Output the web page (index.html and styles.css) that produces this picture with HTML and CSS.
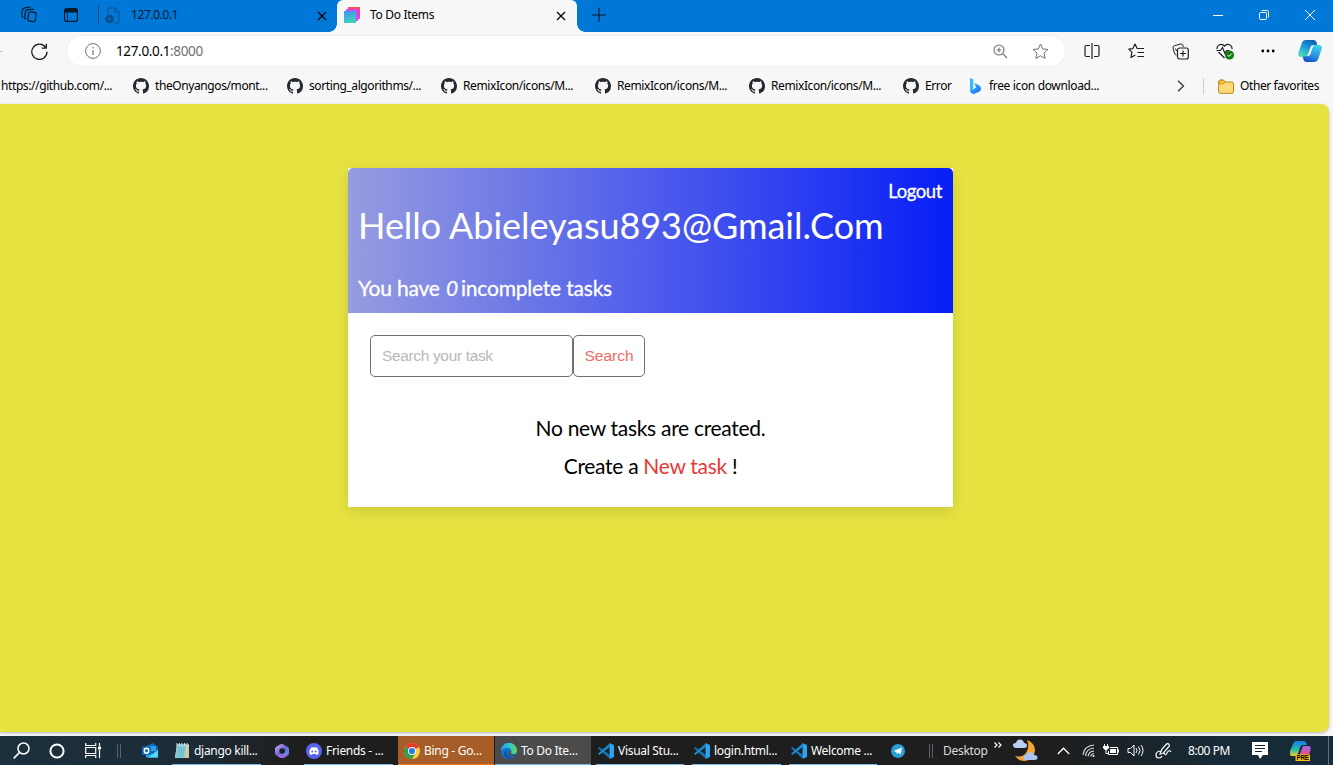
FILE: index.html
```
<!DOCTYPE html>
<html lang="en">
<head>
<meta charset="utf-8">
<title>To Do Items</title>
<link rel="stylesheet" href="styles.css">
</head>
<body>
<svg class="defs" width="0" height="0" aria-hidden="true">
  <defs>
    <linearGradient id="pink" x1="0" y1="0" x2="0" y2="1"><stop offset="0" stop-color="#f0564e"/><stop offset=".5" stop-color="#ee35c9"/><stop offset="1" stop-color="#c95cf5"/></linearGradient>
    <linearGradient id="aqua" x1="0" y1="0" x2=".3" y2="1"><stop offset="0" stop-color="#3f93ee"/><stop offset="1" stop-color="#3fd0c0"/></linearGradient>
    <linearGradient id="bingfill" x1="0" y1="0" x2="1" y2="1"><stop offset="0" stop-color="#2fc1ff"/><stop offset=".65" stop-color="#2589f5"/><stop offset="1" stop-color="#2a58dd"/></linearGradient>
    <linearGradient id="cop1" x1=".7" y1="0" x2=".2" y2="1"><stop offset="0" stop-color="#0d5fae"/><stop offset=".45" stop-color="#1c9bd8"/><stop offset="1" stop-color="#4fe0b8"/></linearGradient>
    <linearGradient id="cop2" x1=".7" y1="0" x2=".3" y2="1"><stop offset="0" stop-color="#3fd3e8"/><stop offset=".5" stop-color="#2a9be8"/><stop offset="1" stop-color="#1650cf"/></linearGradient>
    <linearGradient id="cop3" x1="0" y1="0" x2="0" y2="1"><stop offset="0" stop-color="#1877e9"/><stop offset=".55" stop-color="#28b9a6"/><stop offset="1" stop-color="#e6cf37"/></linearGradient>
    <linearGradient id="cop4" x1="0" y1="0" x2="0" y2="1"><stop offset="0" stop-color="#a064ed"/><stop offset="1" stop-color="#f14e79"/></linearGradient>
    <linearGradient id="edge1" x1="0" y1="0" x2="1" y2="0"><stop offset="0" stop-color="#249fe2"/><stop offset=".55" stop-color="#2cc8c8"/><stop offset="1" stop-color="#68db4c"/></linearGradient>
    <linearGradient id="m365" x1="0" y1="0" x2="1" y2="1"><stop offset="0" stop-color="#c9b4fa"/><stop offset=".5" stop-color="#6a62d6"/><stop offset="1" stop-color="#4fb2ed"/></linearGradient>
    <symbol id="github" viewBox="0 0 16 16"><path fill="#24292f" d="M8 0C3.58 0 0 3.58 0 8c0 3.54 2.29 6.53 5.47 7.59.4.07.55-.17.55-.38 0-.19-.01-.82-.01-1.49-2.01.37-2.53-.49-2.69-.94-.09-.23-.48-.94-.82-1.13-.28-.15-.68-.52-.01-.53.63-.01 1.08.58 1.23.82.72 1.21 1.87.87 2.33.66.07-.52.28-.87.51-1.07-1.78-.2-3.64-.89-3.64-3.95 0-.87.31-1.59.82-2.15-.08-.2-.36-1.02.08-2.12 0 0 .67-.21 2.2.82.64-.18 1.32-.27 2-.27.68 0 1.36.09 2 .27 1.53-1.04 2.2-.82 2.2-.82.44 1.1.16 1.92.08 2.12.51.56.82 1.27.82 2.15 0 3.07-1.87 3.75-3.65 3.95.29.25.54.73.54 1.48 0 1.07-.01 1.93-.01 2.2 0 .21.15.46.55.38A8.01 8.01 0 0 0 16 8c0-4.42-3.58-8-8-8z"/></symbol>
    <symbol id="vscode" viewBox="0 0 16 16"><path fill="#1576b8" d="M0 5.2 1.3 4l10.2 7.8v3.7L0 5.2z"/><path fill="#1b8ad3" d="M0 10.8 1.3 12l10.200-7.800V.5L0 10.800z"/><path fill="#2ba3ee" d="M11.500 0 16 2v12l-4.500 2z"/></symbol>
    <symbol id="close" viewBox="0 0 10 10"><path d="M1 1l8 8M9 1L1 9" fill="none" stroke="currentColor" stroke-width="1.200"/></symbol>
  </defs>
</svg>

<header class="tabstrip">
  <svg class="i workspaces" width="18" height="18" viewBox="0 0 18 18"><g fill="none" stroke="#0b1a28" stroke-width="1.200" stroke-linecap="round"><rect x="8.200" y="6" width="7.600" height="9.500" rx="2" transform="rotate(8 12 11)"/><path d="M5.500 13.200Q4.600 12.500 4.800 11L5.300 6Q5.600 4 7.500 3.600L13.500 3.300M2.800 11.200Q1.600 10.500 1.700 9L2.200 4.500Q2.500 2.300 4.500 1.800L10.500 1"/></g></svg>
  <svg class="i tab-actions" width="14" height="14" viewBox="0 0 14 14"><rect x=".6" y=".6" width="12.800" height="12.800" rx="2.200" fill="none" stroke="#0b1a28" stroke-width="1.200"/><path d="M.6 3V2.500C.6 1.400 1.400.6 2.500.6h9c1.100 0 1.900.8 1.900 1.900v2H.6z" fill="#0b1a28"/><path d="M3.500 4v9" stroke="#0b1a28" stroke-width=".7"/></svg>
  <span class="tab-rule"></span>
  <svg class="i page-icon" width="16" height="17" viewBox="0 0 16 17"><path d="M3 7V2.500C3 1.500 3.500 1 4.500 1H10l4 4v9.500c0 1-.5 1.500-1.500 1.500H9M10 1v4h4" fill="none" stroke="#0a559b" stroke-width="1.200"/><circle cx="4.500" cy="12" r="4.300" fill="#0a4d8c"/><path d="M3 10.500l3 3m0-3l-3 3" stroke="#0078d7"/></svg>
  <span class="tab-title first">127.0.0.1</span>
  <svg class="i tab-close" width="10" height="10"><use href="#close"/></svg>
  <div class="tab">
    <svg class="i" width="16" height="16" viewBox="0 0 16 16"><path d="M4 0h12v12H4z" fill="url(#pink)"/><path d="M2 2h12v12H2z" fill="#d944ee"/><path d="M0 4h12v12H0z" fill="url(#aqua)"/></svg>
    <span class="tab-title">To Do Items</span>
    <svg class="i end" width="10" height="10"><use href="#close"/></svg>
  </div>
  <svg class="i plus" width="14" height="14" viewBox="0 0 14 14"><path d="M7 0v14M0 7h14" stroke="#071a2b" stroke-width="1.200"/></svg>
  <div class="window-buttons">
    <svg width="10" height="10" viewBox="0 0 10 10"><path d="M0 5.500h10" stroke="#fff"/></svg>
    <svg width="10" height="10" viewBox="0 0 10 10"><rect x=".5" y="2.500" width="7" height="7" rx="1" fill="none" stroke="#fff"/><path d="M2.500.5H8C9 .5 9.500 1 9.500 2v5.500" fill="none" stroke="#fff"/></svg>
    <svg width="10" height="10" viewBox="0 0 10 10"><path d="M0 0l10 10M10 0L0 10" stroke="#fff"/></svg>
  </div>
</header>

<nav class="toolbar">
  <span class="forward-end"></span>
  <svg class="i reload" width="17" height="17" viewBox="0 0 17 17"><path d="M14.800 4.700A7.600 7.600 0 1 0 16 8.800M15.300.7v4.500h-4.600" fill="none" stroke="#1b1b1b" stroke-width="1.300"/></svg>
  <div class="address">
    <svg class="i" width="16" height="16" viewBox="0 0 16 16"><circle cx="8" cy="8" r="7.400" fill="none" stroke="#707070"/><path d="M8 7v5M8 4v1.500" stroke="#707070" stroke-width="1.200"/></svg>
    <span class="url">127.0.0.1<span>:8000</span></span>
    <svg class="i end" width="15" height="15" viewBox="0 0 15 15"><path d="M6 1a5 5 0 1 1 0 10A5 5 0 0 1 6 1zM9.700 9.700L14 14M6 3.500v5M3.500 6h5" fill="none" stroke="#707070" stroke-width="1.100"/></svg>
    <svg class="i star" width="17" height="17" viewBox="0 0 17 17"><path d="M8.500 1l2.200 4.900 5.200.6-3.900 3.600 1.100 5.400-4.600-2.700-4.600 2.700 1.100-5.400L1.100 6.500l5.200-.6z" fill="none" stroke="#707070" stroke-linejoin="round"/></svg>
  </div>
  <svg class="i split" width="16" height="16" viewBox="0 0 16 16"><path d="M6 2.500H2.500Q1 2.500 1 4v8q0 1.500 1.500 1.500H6M10 2.500h3.500Q15 2.500 15 4v8q0 1.500-1.500 1.500H10M8 0v16" fill="none" stroke="#202020" stroke-width="1.200"/></svg>
  <svg class="i favs" width="17" height="16" viewBox="0 0 17 16"><path d="M10.500 5.500L9 5.300 7 1 4.900 5.600.8 6l3.100 3.200L3 14.500l4.300-2.400M10.500 5.500H16M9.500 9.500H16M9.500 13.500H16" fill="none" stroke="#202020" stroke-width="1.200" stroke-linejoin="round"/></svg>
  <svg class="i colls" width="17" height="17" viewBox="0 0 17 17"><path d="M4.500 12Q2.700 11.500 2.400 10L1 5Q.6 3.300 2.300 2.800L8.500 1Q10.200.6 10.800 2.200l.5 1.800M4.500 8L3.500 5.500" fill="none" stroke="#202020"/><rect x="5.500" y="5" width="10.800" height="11" rx="2" fill="none" stroke="#202020" stroke-width="1.200"/><path d="M11 7.500v6M8 10.500h6" stroke="#202020" stroke-width="1.200"/></svg>
  <svg class="i health" width="18" height="17" viewBox="0 0 18 17"><path d="M1 6C.5 2 5.500-.5 8.500 3 11.500-.5 16.500 2 16 6M.5 7.500h4l2-3 2.500 6 1.600-3H13M2.500 9l6 6" fill="none" stroke="#202020" stroke-width="1.200"/><circle cx="13.500" cy="12" r="4.500" fill="#107c10"/><path d="M11.500 12l1.500 1.500 2.800-3" fill="none" stroke="#fff"/></svg>
  <svg class="i more" width="14" height="4" viewBox="0 0 14 4"><circle cx="1.800" cy="2" r="1.400"/><circle cx="7" cy="2" r="1.400"/><circle cx="12.200" cy="2" r="1.400"/></svg>
  <svg class="i copilot" width="24" height="22" viewBox="0 0 24 22"><path d="M8 0h7.500q2.500 0 3.200 3l.8 3H15q-2 0-3 3l-2 6q-.700 2-3 2H3.200Q-.7 17 .5 12.500L3.800 3Q5 0 8 0z" fill="url(#cop1)"/><path d="M16 22H8.500q-2.500 0-3.200-3l-.6-2.300L9 16q2 0 3-3l2-6q.700-2 3-2h3.800Q24.700 5 23.500 9.500L20.200 19Q19 22 16 22z" fill="url(#cop2)"/><path d="M13 6q1-1 3.500-.5-1.500.5-2.200 3L12.500 14q-.7 2.500-4 2.300Q10 16 11 12.500z" fill="#f7f7f7"/></svg>
</nav>

<nav class="favorites">
  <span class="fav-text clipped">https://github.com/...</span>
  <a class="fav"><svg><use href="#github"/></svg><span>theOnyangos/mont...</span></a>
  <a class="fav sorting"><svg><use href="#github"/></svg><span>sorting_algorithms/...</span></a>
  <a class="fav"><svg><use href="#github"/></svg><span>RemixIcon/icons/M...</span></a>
  <a class="fav"><svg><use href="#github"/></svg><span>RemixIcon/icons/M...</span></a>
  <a class="fav"><svg><use href="#github"/></svg><span>RemixIcon/icons/M...</span></a>
  <a class="fav error"><svg><use href="#github"/></svg><span>Error</span></a>
  <a class="fav bing"><svg class="bing-icon" viewBox="0 0 11 16"><path d="M0 0l3.300 1.200v9.500L0 14z" fill="#35bdfb"/><path d="M4.500 5l4.200 2Q11 8.200 11 10.500 11 13 8.500 14L4 16Q1 16 0 13l6-3.200z" fill="url(#bingfill)"/></svg><span>free icon download...</span></a>
  <svg class="i overflow" width="8" height="12" viewBox="0 0 8 12"><path d="M1 .7L6.500 6 1 11.300" fill="none" stroke="#333" stroke-width="1.300"/></svg>
  <span class="fav-rule"></span>
  <svg class="i folder" width="16" height="15" viewBox="0 0 16 15"><path d="M.6 3Q.6 1 2.500 1h3l2 2h6q2 0 2 2v7.500q0 1.900-2 1.900h-11q-1.900 0-1.900-1.900z" fill="#ffda76" stroke="#b5891c"/><path d="M1 4.800h4.500l2-1.600-2-2H2.500Q1 1.200 1 3z" fill="#f6c33c" stroke="#b5891c" stroke-width=".7"/></svg>
  <span class="fav-text other">Other favorites</span>
</nav>

<div class="viewport">
<main class="page">
  <section class="card">
    <div class="banner">
      <a class="logout">Logout</a>
      <h1>Hello Abieleyasu893@Gmail.Com</h1>
      <p class="count">You have <i>0</i><span>incomplete tasks</span></p>
    </div>
    <form class="search">
      <input type="text" placeholder="Search your task"><button type="button">Search</button>
    </form>
    <div class="empty">
      <p class="none">No new tasks are created.</p>
      <p class="create">Create a <a>New task</a> !</p>
    </div>
  </section>
</main>
</div>

<footer class="taskbar">
  <svg class="i t-search" width="17" height="17" viewBox="0 0 17 17"><circle cx="10.500" cy="6.500" r="5.500" fill="none" stroke="#fff" stroke-width="1.500"/><path d="M6.500 10.500L.7 16.300" stroke="#fff" stroke-width="1.700"/></svg>
  <svg class="i t-cortana" width="16" height="16" viewBox="0 0 16 16"><circle cx="8" cy="8" r="6.600" fill="none" stroke="#fff" stroke-width="2"/></svg>
  <svg class="i t-view" width="17" height="15" viewBox="0 0 17 15"><path d="M.7 0v2.500h10V0M.7 15v-2.500h10V15M.7 4.500h10v6H.7zM14.500 0v3M14.500 7v8" fill="none" stroke="#fff" stroke-width="1.200"/><path d="M13 3.500h3v3h-3z" fill="#fff"/></svg>
  <span class="grip t-grip1"></span>
  <svg class="i t-outlook" width="17" height="15" viewBox="0 0 17 15"><path d="M4 3l6.500-3 5.500 4v10H4z" fill="#1067b8"/><path d="M7 3h7v5H7z" fill="#2b9fe6"/><path d="M4 8l7 3 5-4v7.500H4z" fill="#28a8ea"/><path d="M16 7v7.500H6z" fill="#50d9ff"/><path d="M0 3.500h9v8.500H0z" fill="#0f6cbd"/><ellipse cx="4.500" cy="7.700" rx="2.200" ry="2.500" fill="none" stroke="#fff" stroke-width="1.400"/></svg>
  <a class="task notepad"><svg viewBox="0 0 16 16"><path d="M3 1.500h12V15H1z" fill="#c8edf2"/><path d="M3 1.500h9.500L11 15H1z" fill="#8bcbd9"/><path d="M13 3h2v12h-4z" fill="#d6c79b"/><path d="M3 0v3M5.500 0v3M8 0v3M10.500 0v3M13 0v3" stroke="#ddd"/><path d="M4 5h7M3.500 7h7M3.300 9h7M3 11h7M2.500 13h7" stroke="#4d9fb4" stroke-width=".5"/></svg><span>django kill...</span></a>
  <svg class="i t-365" width="14" height="14" viewBox="0 0 14 14"><path fill-rule="evenodd" d="M5 .5Q7-.6 9 .7l3.500 2Q14 3.500 14 5.500V9q0 1.500-1.500 2.500L9 13.500q-2 1-4 0L1.500 11.500Q0 10.500 0 9V5q0-1.500 1.500-2.500zM6.500 4L4.500 5.500v3L7 10l3-1.700V5.500z" fill="url(#m365)"/><path d="M3 10l4 1.500L13 9l-1 3-4 2q-4 0-6-2.500z" fill="#9c68db"/></svg>
  <a class="task discord"><svg viewBox="0 0 16 16"><circle cx="8" cy="8" r="8" fill="#5865f2"/><path d="M5 4.500q3-.7 6 0l1.500 3v3.500L10.500 12l-.8-1H6.300l-.8 1-2-1V7.500z" fill="#fff"/><circle cx="6.300" cy="8.500" r="1" fill="#5865f2"/><circle cx="9.700" cy="8.500" r="1" fill="#5865f2"/></svg><span>Friends - ...</span></a>
  <a class="task chrome"><svg viewBox="0 0 16 16"><circle cx="8" cy="8" r="8" fill="#ffcd40"/><path d="M8 8L1.070 4A8 8 0 0 1 14.930 4z" fill="#e33b2e"/><path d="M1.070 4A8 8 0 0 0 8 16l3.500-6L8 8z" fill="#2aa14c"/><circle cx="8" cy="8" r="4" fill="#fff"/><circle cx="8" cy="8" r="3.100" fill="#3178e6"/></svg><span>Bing - Go...</span></a>
  <a class="task edge"><svg viewBox="0 0 16 16"><circle cx="8" cy="8" r="8" fill="#1472ca"/><path d="M0 8A8 8 0 0 1 16 7.500Q16 11 12 11q-3 0-2-2 1-3-2.500-4Q3 4 0 8z" fill="url(#edge1)"/><path d="M6 7q-2 5 3 7 3 1 5.500-1.500Q12 16 8 16 3 15 3 11q0-3 3-4z" fill="#1052a2"/><path d="M9.500 7.500Q11 9 9.800 10.200q1 2.500 5 1.600L14 13Q9 14 7.500 11q-.7-2 2-3.500z" fill="#4b4b4b"/></svg><span>To Do Ite...</span></a>
  <a class="task code1"><svg><use href="#vscode"/></svg><span>Visual Stu...</span></a>
  <a class="task code2"><svg><use href="#vscode"/></svg><span>login.html...</span></a>
  <a class="task code3"><svg><use href="#vscode"/></svg><span>Welcome ...</span></a>
  <svg class="i t-telegram" width="14" height="14" viewBox="0 0 14 14"><circle cx="7" cy="7" r="7" fill="#2a9fd9"/><path d="M2.500 7L11 3.500 9.700 10.500 7 8.800l-1.200 1.400-.5-2.200z" fill="#fff"/></svg>
  <span class="grip t-grip2"></span>
  <span class="desktop">Desktop</span>
  <svg class="i t-chevrons" width="8" height="6" viewBox="0 0 8 6"><path d="M.5.500L3 3 .5 5.500M4.500.500L7 3 4.500 5.500" fill="none" stroke="#fff" stroke-width="1.200"/></svg>
  <svg class="i t-moon" width="25" height="23" viewBox="0 0 25 23"><path d="M14 1q8 3 8 10.500Q21 21 12 22 6 22 2 17q7 2 11-3 4-6 1-13z" fill="#f5a52e"/><path d="M3 9Q0 8.500 0 6.200T3 4Q4 0 7.500.500 10.500 1 11 4q3 0 3 2.500T11 9z" fill="#b9cff5"/><path d="M13 21q-3 0-3-2.300T13 16q1-3 4-3t4 3q3.500 0 3.500 2.500T21.500 21z" fill="#a9c5f2"/></svg>
  <svg class="i t-up" width="13" height="8" viewBox="0 0 13 8"><path d="M.8 7L6.500 1.200 12.200 7" fill="none" stroke="#fff" stroke-width="1.300"/></svg>
  <svg class="i t-wifi" width="13" height="13" viewBox="0 0 13 13"><g fill="none" stroke="#ddd" stroke-width="1.100"><path d="M1 11Q2 2 12 1"/><path d="M3.500 12Q4 5 12 4"/><path d="M6 12.500Q6.500 7.500 12 7"/><path d="M8.500 12.500Q9 10 12 9.500"/></g><circle cx="11.500" cy="12" r="1" fill="#fff"/></svg>
  <svg class="i t-battery" width="16" height="13" viewBox="0 0 16 13"><path d="M1.500 0v2M4.500 0v2M3 6v3.500h2.500M7 3.500h7.500v7h-9V7M15.500 5.500v3" fill="none" stroke="#fff"/><path d="M0 2h6v2L4 6H2L0 4zM7 5h6v4H7z" fill="#fff"/></svg>
  <svg class="i t-volume" width="17" height="13" viewBox="0 0 17 13"><path d="M1 4.500h2.500L7 1v11L3.500 8.500H1zM9 4q2 2.500 0 5M11.500 2.500q3 4 0 8M14 1q4 5.500 0 11" fill="none" stroke="#fff"/></svg>
  <svg class="i t-pen" width="17" height="16" viewBox="0 0 17 16"><path d="M6.500 8Q1 8 1 12q0 3 3 3 2 0 3-2M5 11l2-5 4.500-5Q13 0 14 1.500T13 4.500L8 10.500zM9 9q1 5 3 1t4-1" fill="none" stroke="#fff" stroke-width="1.200"/></svg>
  <span class="clock">8:00 PM</span>
  <svg class="i t-note" width="16" height="17" viewBox="0 0 16 17"><path d="M0 0h16v13h-5l-3 4-2-4H0z" fill="#fff"/><path d="M3 3.500h10M3 6.500h10M3 9.500h7" stroke="#17242e" stroke-width="1.200"/></svg>
  <svg class="i t-pre" width="22" height="20" viewBox="0 0 22 20"><path d="M6 0h8q2 0 3 4h-5q-2 1-3 6l-2 5H2q-3 0-2-5l3-7q1-3 3-3z" fill="url(#cop3)"/><path d="M13 5h6q2 0 1.500 4l-2 6H9z" fill="url(#cop4)"/><path d="M5.500 13.500H20V20H5.500z" fill="#ffc20a"/><text x="6.500" y="19" font-size="6.300" font-weight="700" textLength="12.500">PRE</text></svg>
  <span class="show-desktop"></span>
</footer>
</body>
</html>
```
FILE: styles.css
```
* { box-sizing: border-box; }
html, body { height: 100%; }
body {
  margin: 0;
  display: flex;
  flex-direction: column;
  overflow: hidden;
  background: #f7f7f7;
  color: #000;
  font: 12px/16px "Noto Sans", sans-serif;
  letter-spacing: -0.3px;
}
.defs { position: absolute; }
.i { display: block; flex: none; }
span { white-space: nowrap; }
.end { margin-left: auto; }

/* Tab strip */
.tabstrip { flex: none; height: 32px; display: flex; align-items: center; background: #0078d7; }
.workspaces { margin: 0 0 2px 20px; }
.tab-actions { margin: 0 0 2px 26px; }
.tab-rule { width: 1px; height: 20px; margin: 0 0 2px 20px; background: #064a83; }
.page-icon { margin: 0 0 2px 6px; }
.tab-title { margin-bottom: 2px; }
.tab-title.first { width: 186px; margin-left: 10px; letter-spacing: -0.4px; color: #071a2b; }
.tab-close { margin-right: 10px; }
.tab {
  position: relative;
  width: 240px;
  height: 32px;
  padding: 0 11px 0 7px;
  display: flex;
  align-items: center;
  gap: 10px;
  background: #f7f7f7;
  border-radius: 6px 6px 0 0;
}
.tab > .i:first-child { margin-bottom: 2px; }
.tab::before, .tab::after { content: ""; position: absolute; bottom: 0; width: 8px; height: 8px; }
.tab::before { right: 100%; background: radial-gradient(circle at 0 0, transparent 7.500px, #f7f7f7 8px); }
.tab::after { left: 100%; background: radial-gradient(circle at 100% 0, transparent 7.500px, #f7f7f7 8px); }
.plus { margin: 0 0 2px 15px; }
.window-buttons { display: flex; gap: 36px; margin: 0 18px 2px auto; }
.window-buttons svg { display: block; }

/* Address row */
.toolbar { flex: none; height: 38px; display: flex; align-items: center; }
.forward-end { width: 3px; height: 1px; background: #ccc; }
.reload { margin-left: 28px; }
.address {
  width: 998px;
  height: 30px;
  margin-left: 19px;
  padding: 0 16px 0 18px;
  display: flex;
  align-items: center;
  border-radius: 15px;
  background: #fff;
  box-shadow: 0 0 3px #0001;
}
.url { margin-left: 15px; font-size: 13.500px; letter-spacing: -0.350px; }
.url span { color: #707070; }
.star { margin-left: 24px; }
.split { margin-left: 19px; }
.favs { margin-left: 28px; }
.colls { margin-left: 27px; }
.health { margin-left: 27px; }
.more { margin-left: 27px; }
.copilot { margin-left: 23px; }

/* Favorites bar */
.favorites { flex: none; height: 34px; padding-bottom: 2px; display: flex; align-items: center; letter-spacing: -0.4px; }
.clipped { width: 132px; margin-left: 1px; }
.fav { width: 154px; display: flex; align-items: center; gap: 6px; flex: none; }
.fav svg { width: 16px; height: 16px; flex: none; }
.fav.error { width: 67px; }
.fav.bing { width: 207px; gap: 8px; letter-spacing: -0.350px; }
.fav .bing-icon { width: 11px; }
.fav-rule { width: 1px; height: 16px; margin: 0 14px 0 18px; background: #ccc; }
.other { margin-left: 6px; }

/* Page */
.viewport { flex: none; height: 632px; padding: 0 4px 4px 0; }
.page { height: 628px; padding: 64px 0 0 348px; border-radius: 0 8px 8px 0; background: #e6e341; box-shadow: 0 1px 3px #0004; }
.card {
  width: 605px;
  height: 339px;
  background: #fff;
  box-shadow: 0 4px 14px rgba(0, 0, 0, .12);
  font-family: Lato, sans-serif;
  font-size: 21px;
}
.banner {
  height: 145px;
  padding: 11px 11px 0 10px;
  display: flex;
  flex-direction: column;
  border-radius: 5px 5px 0 0;
  background: linear-gradient(to right, #969ce0, #071ef6);
  color: #fff;
}
.logout { align-self: flex-end; font-size: 18.500px; line-height: 24px; letter-spacing: -0.400px; -webkit-text-stroke: .3px #fff; }
h1 { margin: -1px 0 0; font-size: 36px; line-height: 46px; font-weight: 400; letter-spacing: -0.050px; white-space: nowrap; }
.count { margin: 27px 0 0; line-height: 26px; letter-spacing: -0.200px; white-space: nowrap; -webkit-text-stroke: .3px #fff; }
.count i { margin: 0 3px 0 1px; }
.search { margin: 0; padding: 22px 0 0 22px; display: flex; }
.search input, .search button {
  height: 42px;
  border: 1px solid #6f6f6f;
  border-radius: 5px;
  background: #fff;
  font: 15.500px "Liberation Sans", Arial, sans-serif;
}
.search input { width: 203px; padding: 0 10px 1px 11px; letter-spacing: -0.350px; }
.search input::placeholder { color: #b7b7b7; }
.search button { width: 72px; padding: 0 0 1px; color: #f26b66; }
.empty { padding-top: 32px; text-align: center; letter-spacing: -0.300px; }
.empty p { margin: 0; line-height: 38px; }
.empty a { color: #e53935; }

/* Taskbar */
.taskbar {
  flex: none;
  height: 29px;
  display: flex;
  align-items: center;
  background: linear-gradient(to right, #1c303d 0, #1c2c37 180px, #1e1e1e 300px, #1e1e1e 1050px, #172a37 1220px, #182b3a 100%);
  color: #fff;
}
.t-search { margin-left: 13px; }
.t-cortana { margin-left: 19px; }
.t-view { margin-left: 20px; }
.grip { width: 4px; height: 14px; border: solid #59626a; border-width: 0 1px; }
.t-grip1 { margin-left: 15px; }
.t-outlook { margin-left: 21px; }
.task { height: 29px; flex: none; display: flex; align-items: center; gap: 4px; border-bottom: 1px solid #76b9ed; }
.task svg { width: 16px; height: 16px; flex: none; margin-top: 1px; }
.task span { margin-top: 1px; }
.notepad { width: 89px; margin-left: 13px; padding-left: 2px; }
.t-365 { margin-left: 14px; }
.discord { width: 89px; margin-left: 15px; padding-left: 2px; }
.chrome { width: 96px; margin-left: 5px; padding-left: 6px; background: #a65d27; border-color: #f47a20; }
.edge { width: 96px; margin-left: 1px; padding-left: 6px; background: #4b4b4b; }
.code1 { width: 88px; margin-left: 5px; padding-left: 2px; }
.code2 { width: 89px; margin-left: 8px; padding-left: 2px; }
.code3 { width: 88px; margin-left: 8px; padding-left: 2px; }
.t-telegram { margin-left: 14px; }
.t-grip2 { margin-left: 24px; }
.desktop { width: 51px; margin-left: 10px; color: #ddd; }
.t-chevrons { margin-bottom: 11px; }
.t-moon { margin-left: 11px; }
.t-up { margin-left: 19px; }
.t-wifi { margin-left: 12px; }
.t-battery { margin-left: 8px; }
.t-volume { margin-left: 8px; }
.t-pen { margin-left: 11px; }
.clock { width: 64px; margin-left: 16px; letter-spacing: -0.450px; }
.t-pre { margin-left: 22px; font-family: "Liberation Sans", sans-serif; letter-spacing: 0; }
.show-desktop { width: 1px; height: 29px; margin-left: auto; margin-right: 4px; background: #64717b; }
```
